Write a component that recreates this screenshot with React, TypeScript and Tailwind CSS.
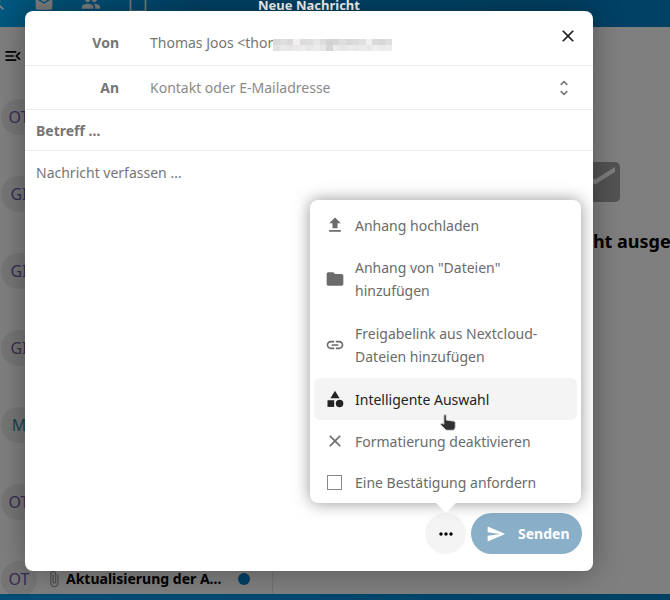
import type { ReactNode } from 'react'
import {
  MdAttachFile,
  MdCalendarToday,
  MdCategory,
  MdClose,
  MdEmail,
  MdFileUpload,
  MdFolder,
  MdGroup,
  MdLink,
  MdMenuOpen,
  MdMoreHoriz,
  MdSearch,
  MdSend,
  MdUnfoldMore,
} from 'react-icons/md'

const senders = [
  { initials: 'OT', color: 'text-[#7058a8]' },
  { initials: 'GI', color: 'text-[#6a5ca8]' },
  { initials: 'GI', color: 'text-[#6a5ca8]' },
  { initials: 'GI', color: 'text-[#7a5c90]' },
  { initials: 'M', color: 'text-[#2f8ca0]' },
  { initials: 'OT', color: 'text-[#7058a8]' },
  { initials: 'OT', color: 'text-[#7058a8]', subject: 'Aktualisierung der A…' },
]

const mosaicTop = ['bg-[#d9d9d9]', 'bg-[#dedede]', 'bg-[#dadada]', 'bg-[#f3f0ed]', 'bg-[#dcdcdf]', 'bg-[#dedede]', 'bg-[#e6e6e6]', 'bg-[#dcdcdc]', 'bg-[#d3d3d3]', 'bg-[#d6d6d8]', 'bg-[#dedede]', 'bg-[#d8d8d8]', 'bg-[#dcdcdc]', 'bg-[#e0e0e0]', 'bg-[#f1f1ef]', 'bg-[#dadadc]', 'bg-[#d8d8d8]', 'bg-[#dfdfdf]']
const mosaicBottom = ['bg-[#e2e2e2]', 'bg-[#e8e8e8]', 'bg-[#e6e6e6]', 'bg-[#e9e9e9]', 'bg-[#ececec]', 'bg-[#e6e6e6]', 'bg-[#ebebeb]', 'bg-[#e7e7e7]', 'bg-[#d6d6d6]', 'bg-[#ececec]', 'bg-[#e6e6e6]', 'bg-[#eaeaea]', 'bg-[#e7e7e7]', 'bg-[#ebebeb]', 'bg-[#e8e8e8]', 'bg-[#efefef]', 'bg-[#ebebeb]', 'bg-[#ededed]']

function MenuItem({
  icon,
  active,
  children,
}: {
  icon: ReactNode
  active?: boolean
  children: ReactNode
}) {
  return (
    <button
      type="button"
      role="menuitem"
      className={
        active
          ? 'relative flex min-h-[42px] w-full items-center rounded-md bg-[#f4f4f4] text-left text-[#222]'
          : 'relative flex min-h-[42px] w-full items-center rounded-md text-left text-[#6b6b6b]'
      }
    >
      <span className="flex w-[41px] shrink-0 justify-center text-xl">{icon}</span>
      {children}
    </button>
  )
}

function HandCursor() {
  return (
    <svg
      viewBox="0 0 16 18"
      className="absolute top-[36px] left-[126px] z-10 h-[18px] w-4"
      aria-hidden="true"
    >
      <path
        d="M3.800 1.800c0-1.600 2.500-1.600 2.500 0v4.200l7.200 1.100c1.100.2 1.800.9 1.800 2v3.600c0 1.700-.8 3.600-2.400 3.600H7.200c-.9 0-1.500-.4-2-1L1 11.200c-1-1.300.4-2.600 1.700-1.800l1.100.8z"
        fill="#303133"
        stroke="#dcdcdc"
        strokeWidth="1"
      />
    </svg>
  )
}

function AttachmentMenu() {
  return (
    <div
      role="menu"
      className="absolute -right-[115px] bottom-full mb-[10px] w-[271px] rounded-lg bg-white px-1 pt-1 leading-[23px] shadow-[0_0_16px_rgba(77,77,77,0.6)]"
    >
      <MenuItem icon={<MdFileUpload />}>Anhang hochladen</MenuItem>
      <MenuItem icon={<MdFolder />}>
        <span className="py-[10px]">
          Anhang von "Dateien"
          <br />
          hinzufügen
        </span>
      </MenuItem>
      <MenuItem icon={<MdLink />}>
        <span className="py-[10px]">
          Freigabelink aus Nextcloud-
          <br />
          Dateien hinzufügen
        </span>
      </MenuItem>
      <MenuItem icon={<MdCategory />} active>
        Intelligente Auswahl
        <HandCursor />
      </MenuItem>
      <MenuItem icon={<MdClose />}>Formatierung deaktivieren</MenuItem>
      <label className="flex h-[41px] items-center text-[#6b6b6b]">
        <span className="flex w-[41px] justify-center">
          <input type="checkbox" className="size-[15px] appearance-none border border-[#888] bg-white" />
        </span>
        Eine Bestätigung anfordern
      </label>
      <svg viewBox="0 0 20 10" className="absolute top-full right-[125px] h-[10px] w-5" aria-hidden="true">
        <path d="M0 0h20L10 10z" fill="#fff" />
      </svg>
    </div>
  )
}

function Mailbox() {
  return (
    <div className="absolute inset-0 flex flex-col overflow-hidden">
      <header className="flex h-[27px] shrink-0 items-start bg-linear-to-r from-[#00b0ff] via-[#0086cf] via-30% to-[#0082c9] text-white">
        <nav className="-mt-[7px] -ml-[13px] flex gap-[27px] text-xl">
          <a href="#suche" aria-label="Suche"><MdSearch /></a>
          <a href="#mail" aria-label="Mail"><MdEmail /></a>
          <a href="#kontakte" aria-label="Kontakte"><MdGroup /></a>
          <a href="#kalender" aria-label="Kalender"><MdCalendarToday /></a>
        </nav>
      </header>
      <div className="flex min-h-0 flex-1 overflow-hidden bg-white">
        <aside className="w-[273px] shrink-0 border-r border-[#e6e6e6]">
          <div className="flex h-[51px] items-center px-[3px] pt-[7px] text-black">
            <button type="button" aria-label="Navigation schließen" className="text-xl">
              <MdMenuOpen />
            </button>
          </div>
          <ul>
            {senders.map((sender, i) => (
              <li key={i} className="flex h-[77px] items-center">
                <span className={`ml-px flex size-9 shrink-0 items-center justify-center rounded-full bg-[#ececee] text-base ${sender.color}`}>
                  {sender.initials}
                </span>
                {sender.subject && (
                  <>
                    <MdAttachFile className="ml-2 text-lg text-[#999]" />
                    <span className="ml-[3px] w-[172px] font-bold whitespace-nowrap text-black">{sender.subject}</span>
                    <span className="size-3 shrink-0 rounded-full bg-[#0082c9]" />
                  </>
                )}
              </li>
            ))}
          </ul>
        </aside>
        <section className="flex w-[644px] shrink-0 flex-col items-center pt-[125px]">
          <MdEmail className="size-[60px] text-[#a6a6a6]" />
          <h2 className="mt-[15px] text-lg leading-7 font-bold text-black">Keine Nachricht ausgewählt</h2>
        </section>
      </div>
      <div className="h-[6px] shrink-0 bg-linear-to-r from-[#009cf0] to-[#0082c9]" />
    </div>
  )
}

export default function App() {
  return (
    <div className="relative flex min-h-screen flex-col overflow-hidden font-['Noto_Sans',sans-serif] text-sm">
      <Mailbox />
      <div className="relative flex flex-1 flex-col bg-black/50 pr-[77px] pb-[29px] pl-[25px]">
        <h1 className="h-[11px] text-center text-[13px] leading-[11px] font-bold text-white">Neue Nachricht</h1>
        <form
          role="dialog"
          aria-label="Neue Nachricht"
          className="flex flex-1 flex-col rounded-lg bg-white text-[#767676] shadow-[0_0_30px_rgba(0,0,0,0.35)]"
        >
          <div className="flex h-[55px] border-b border-[#ededed] pr-[15px]">
            <span className="mt-[22px] w-[94px] text-right font-bold">Von</span>
            <span className="mt-[22px] ml-[31px] flex flex-1 items-start">
              Thomas Joos &lt;thor
              <span className="mt-[6px] grid w-[119px] grid-cols-18">
                {[...mosaicTop, ...mosaicBottom].map((cell, i) => (
                  <span key={i} className={`h-[6px] ${cell}`} />
                ))}
              </span>
            </span>
            <button type="button" aria-label="Schließen" className="mt-[15px] size-5 text-xl text-[#222]">
              <MdClose />
            </button>
          </div>
          <div className="flex h-11 items-center border-b border-[#ededed] pr-[19px]">
            <label htmlFor="to" className="w-[94px] text-right font-bold">An</label>
            <input
              id="to"
              className="ml-[31px] min-w-0 flex-1 outline-none placeholder:text-[#8a8a8a]"
              placeholder="Kontakt oder E-Mailadresse"
            />
            <button type="button" aria-label="Kontakte anzeigen" className="text-xl text-[#777]">
              <MdUnfoldMore />
            </button>
          </div>
          <input
            aria-label="Betreff"
            className="h-[41px] border-b border-[#ededed] px-[11px] font-bold outline-none placeholder:text-[#767676]"
            placeholder="Betreff …"
          />
          <textarea
            aria-label="Nachricht"
            className="flex-1 resize-none px-[11px] pt-3 outline-none placeholder:text-[#767676]"
            placeholder="Nachricht verfassen …"
          />
          <div className="flex justify-end gap-[5px] pr-[11px] pb-[17px]">
            <div className="relative">
              <button
                type="button"
                aria-label="Aktionen"
                className="flex size-[41px] items-center justify-center rounded-full bg-[#f4f4f4] text-xl text-black"
              >
                <MdMoreHoriz />
              </button>
              <AttachmentMenu />
            </div>
            <button
              type="submit"
              className="flex h-[41px] w-[111px] items-center gap-3 rounded-full bg-[#8aafc8] pl-[15px] font-bold text-white"
            >
              <MdSend className="text-xl" />
              Senden
            </button>
          </div>
        </form>
      </div>
    </div>
  )
}
